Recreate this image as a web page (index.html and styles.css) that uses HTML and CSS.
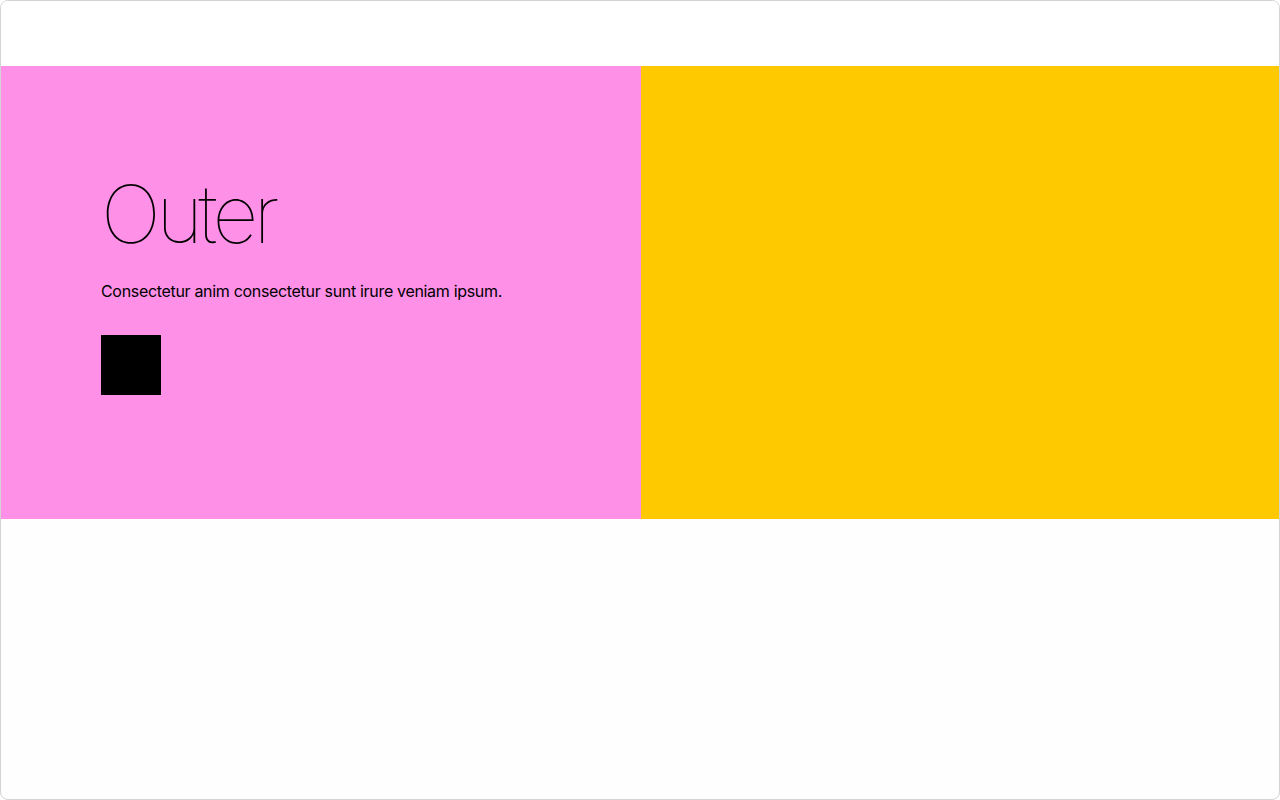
FILE: index.html
```html
<!DOCTYPE html>
<html lang="en">
<head>
<meta charset="utf-8">
<title>Outer</title>
<link rel="stylesheet" href="styles.css">
</head>
<body>
<div class="frame">
  <div class="top-space"></div>
  <section class="hero">
    <div class="hero-left">
      <h1 class="title">Outer</h1>
      <p class="lead">Consectetur anim consectetur sunt irure veniam ipsum.</p>
      <div class="block"></div>
    </div>
    <div class="hero-right"></div>
  </section>
</div>
</body>
</html>
```
FILE: styles.css
```css
* { box-sizing: border-box; }
html, body { margin: 0; padding: 0; background: #ffffff; }
body { font-family: Inter, "Noto Sans", sans-serif; color: #000; }
.frame {
  width: 1280px;
  height: 800px;
  border: 1px solid #d3d3d3;
  border-radius: 8px;
  overflow: hidden;
  background: #fffefe;
}
.top-space { height: 65px; background: #ffffff; }
.hero { display: flex; height: 453px; }
.hero-left {
  width: 640px;
  background: #ff90e8;
  padding: 100px 100px;
  display: flex;
  flex-direction: column;
  align-items: flex-start;
}
.hero-right { flex: 1; background: #ffc900; }
.title {
  margin: 0;
  font-size: 80px;
  font-weight: 100;
  line-height: 96px;
  letter-spacing: -0.058em;
}
.lead {
  margin: 17px 0 0;
  font-size: 16px;
  line-height: 24px;
  letter-spacing: -0.02em;
}
.block { width: 60px; height: 60px; background: #000; margin-top: 32px; }
```
